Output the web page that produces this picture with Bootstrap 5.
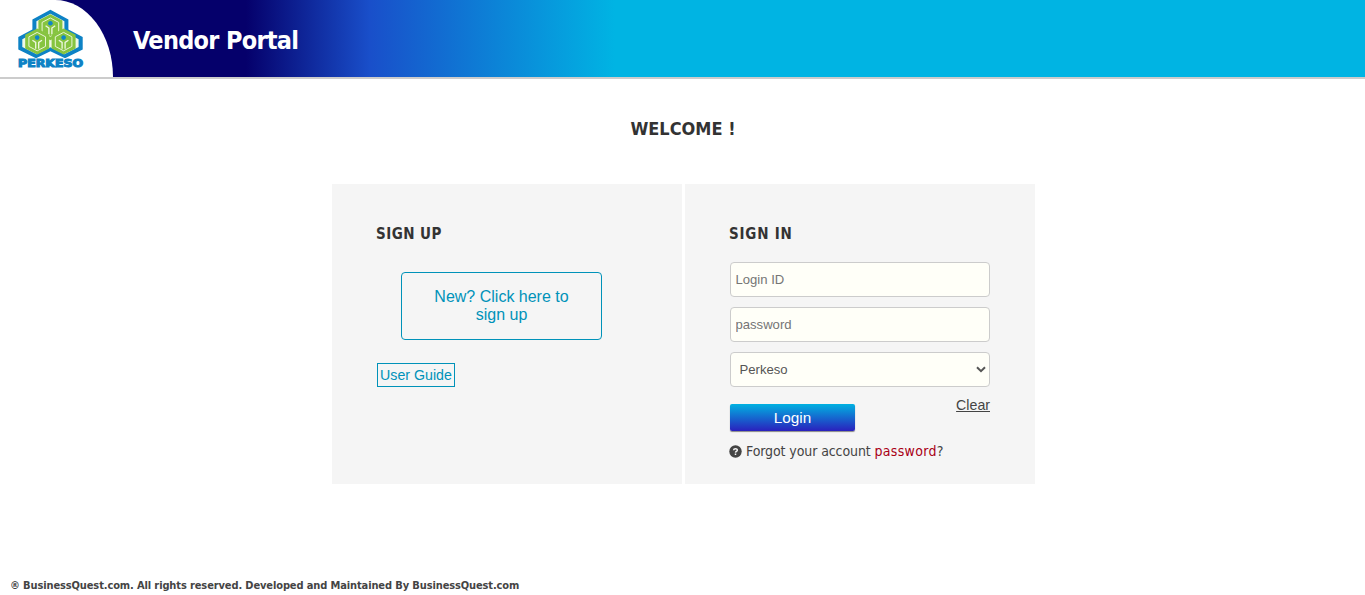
<!DOCTYPE html>
<html lang="en">
<head>
<meta charset="utf-8">
<meta name="viewport" content="width=device-width, initial-scale=1">
<title>Vendor Portal</title>
<link rel="stylesheet" href="https://cdn.jsdelivr.net/npm/bootstrap@5.3.0/dist/css/bootstrap.min.css">
<style>
body{font-family:Tahoma,"DejaVu Sans Condensed","DejaVu Sans",sans-serif;font-stretch:condensed;font-size:14px;line-height:17px;color:#444;background:#fff;height:595px;overflow:hidden}
.arial{font-family:"Liberation Sans",Arial,sans-serif;font-stretch:normal}
.topbar{height:79px;border-bottom:2px solid #ccc;background:linear-gradient(90deg,#05006b 246px,#194fca 370px,#00b4e3 615px)}
.logo-tab{width:113px;height:77px;background:#fff;border-top-right-radius:58px 77px}
.site-title{font-size:25px;line-height:30px;font-weight:700;color:#fff;margin:0 0 0 20px;padding-top:26px;letter-spacing:-.7px}
.welcome{font-size:18px;line-height:22px;font-weight:700;color:#333;margin:39px 0 0 1px}
.panels{width:703px;gap:3px;margin:44px 0 0 332px}
.panel{width:350px;height:300px;background:#f5f5f5;padding:42px 45px 0}
.panel h2{font-size:15px;line-height:16px;font-weight:700;color:#333;margin:0 0 0 -1px;letter-spacing:.45px}
.panel .signin-title{letter-spacing:.8px}
.signup{width:201px;height:68px;margin:30px 0 0 24px;border:1px solid #0092b9;border-radius:4px;color:#0092b9;font-size:16px;line-height:18px;padding:15px 28px;text-align:center;text-decoration:none}
.guide{display:inline-block;width:78px;height:24px;border:1px solid #0092b9;color:#0092b9;font-size:14.2px;line-height:22px;text-decoration:none;text-align:center;margin-top:23px;white-space:nowrap}
.signin-form{margin-top:20px;gap:10px}
.field{width:260px;height:35px;border:1px solid #ccc;border-radius:4px;background:#fffff8;font-size:13.1px;line-height:16px;padding:0 5px 0 4.5px;color:#555;display:block}
.field::placeholder{color:#757575;opacity:1}
.pick{padding:0 26px 0 8.5px;appearance:none}
.chev{position:absolute;right:4px;top:14px}
.login{width:125px;height:27px;border:0;border-radius:2px;background:linear-gradient(#00b1e1,#2a20bd);box-shadow:0 1px 1px rgba(0,0,0,.45);color:#fff;font-size:15.3px;line-height:27px;padding:0;margin:7px 0 1px}
.clear{font-size:14.2px;line-height:17px;color:#444}
.forgot{margin:11px 0 0 -1px;line-height:17px;white-space:nowrap}
.forgot .ask{letter-spacing:-.1px}
.forgot a{color:#a90016;text-decoration:none;letter-spacing:.3px}
.foot{font-size:11px;line-height:14px;font-weight:700;color:#444;margin:95px 0 0 10px;white-space:nowrap;letter-spacing:-.12px}
</style>
</head>
<body>
<header class="topbar d-flex align-items-start">
  <div class="logo-tab">
    <svg width="100" height="76" viewBox="0 0 100 76" role="img" aria-label="Perkeso" class="d-block">
      <defs>
        <g id="cube">
          <path d="M0-13 12-6.8V6.8L0 13-12 6.8V-6.8Z" fill="#86c440"/>
          <path d="M0-9.2 8.3-4.8V4.8L0 9.2-8.3 4.8V-4.8Z" fill="none" stroke="#eaf5d6" stroke-width="1"/>
          <path d="M-4.8-1.4-1.5.8V7.2M4.8-1.4 1.5.8V7.2" fill="none" stroke="#f0f8e2" stroke-width="1.3"/>
          <circle cy="-4" r="2.3" fill="#0f86c8"/>
        </g>
      </defs>
      <path d="M50.4 9.7 68.4 19.5V29.5L82.7 37V49.5L65 58.3 50.4 51.2 36 58.3 18.3 49.5V37L32.4 29.5V19.5Z" fill="#0d82c5"/>
      <path d="M50.4 13.7 64.4 21.3V31.5L78.6 39.3V47L64.3 54.3 50.4 47.3 36.6 54.3 22.3 47V39.3L36.4 31.5V21.3Z" fill="#f0f8e6"/>
      <use href="#cube" x="50.4" y="27.2"/><use href="#cube" x="37.2" y="41.6"/><use href="#cube" x="63.6" y="41.6"/>
      <text x="18" y="67" font-family="DejaVu Sans" font-size="9.8" font-weight="700" fill="#0d82c5" stroke="#0d82c5" stroke-width=".9" textLength="65" lengthAdjust="spacingAndGlyphs">PERKESO</text>
    </svg>
  </div>
  <h1 class="site-title">Vendor Portal</h1>
</header>
<main>
  <h2 class="welcome text-center">WELCOME !</h2>
  <div class="panels d-flex">
    <section class="panel">
      <h2>SIGN UP</h2>
      <a href="#" class="signup arial d-block">New? Click here to sign up</a>
      <a href="#" class="guide arial">User Guide</a>
    </section>
    <section class="panel">
      <h2 class="signin-title">SIGN IN</h2>
      <form class="signin-form d-flex flex-column">
        <input class="field arial" placeholder="Login ID">
        <input class="field arial" type="password" placeholder="password">
        <div class="position-relative">
          <select class="field pick arial"><option>Perkeso</option></select>
          <svg class="chev" width="10" height="7" viewBox="0 0 10 7"><path d="M1 1.2 5 5.1 9 1.2" fill="none" stroke="#555" stroke-width="2"/></svg>
        </div>
        <div class="d-flex justify-content-between align-items-start">
          <button type="button" class="login arial">Login</button>
          <a href="#" class="clear arial">Clear</a>
        </div>
      </form>
      <div class="forgot d-flex align-items-center">
        <svg width="13" height="13" viewBox="0 0 13 13" class="me-1"><circle cx="6.5" cy="6.5" r="6.2" fill="#444"/><path d="M4.6 5.2C4.7 3.2 8.4 3.2 8.3 5.2 8.2 6.4 6.6 6.3 6.5 7.6M6.5 8.6V10" fill="none" stroke="#f5f5f5" stroke-width="1.5"/></svg>
        <span class="ask">Forgot your account <a href="#">password</a>?</span>
      </div>
    </section>
  </div>
</main>
<footer class="foot">® BusinessQuest.com. All rights reserved. Developed and Maintained By BusinessQuest.com</footer>
<script src="https://cdn.jsdelivr.net/npm/bootstrap@5.3.0/dist/js/bootstrap.bundle.min.js"></script>
</body>
</html>
